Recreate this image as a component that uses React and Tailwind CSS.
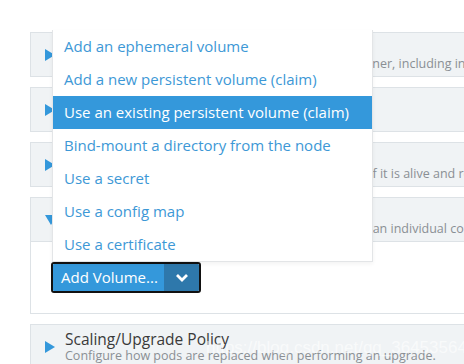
import React from "react";

const font = { fontFamily: '"Open Sans", "Noto Sans", sans-serif' };

function Tri({ down }) {
  return down ? (
    <svg width="12" height="10" viewBox="0 0 12 10" className="shrink-0">
      <polygon points="0,0 12,0 6,10" fill="#3498db" />
    </svg>
  ) : (
    <svg width="10" height="12" viewBox="0 0 10 12" className="shrink-0">
      <polygon points="0,0 10,6 0,12" fill="#3498db" />
    </svg>
  );
}

function Header({ title, sub, down }) {
  return (
    <div className="h-[45px] border border-[#dde2e6] bg-[#f0f3f5] flex items-center pl-[14px] gap-[10px] whitespace-nowrap">
      <Tri down={down} />
      <div className="flex flex-col leading-none">
        <div className="text-[15.5px] text-[#3a3a3a] leading-[18px]">{title}</div>
        <div className="text-[12.5px] text-[#8a8f94] leading-[16px]">{sub}</div>
      </div>
    </div>
  );
}

const items = [
  "Add an ephemeral volume",
  "Add a new persistent volume (claim)",
  "Use an existing persistent volume (claim)",
  "Bind-mount a directory from the node",
  "Use a secret",
  "Use a config map",
  "Use a certificate",
];

export default function App() {
  return (
    <div className="relative w-[464px] h-[364px] overflow-hidden bg-white" style={font}>
      <div className="pt-[32px] pl-[30px] w-[560px] flex flex-col gap-[10px]">
        <Header
          title="Environment Variables"
          sub="Set up values of environment variables for the container, including injecting values from other resources."
        />
        <Header title="Node Scheduling" sub="Configure what nodes the pods can be deployed to" />
        <Header
          title="Health Check"
          sub="Periodically make a request to the containers to see if it is alive and responding correctly."
        />
        <div>
          <Header
            down
            title="Volumes"
            sub="Persist and share data separate from the lifecycle of an individual container."
          />
          <div className="h-[72px] border-x border-b border-[#dde2e6] bg-white pt-[20px] pl-[20px]">
            <div className="relative w-[150px] h-[31px] rounded-[3px] border-2 border-[#111] flex overflow-hidden">
              <div className="flex-1 bg-[#3498db] text-white text-[15px] flex items-center pl-[8px]">
                Add Volume...
              </div>
              <div className="w-[35px] bg-[#2e78ab] flex items-center justify-center">
                <svg width="14" height="10" viewBox="0 0 14 10">
                  <polyline points="2,2 7,7 12,2" fill="none" stroke="white" strokeWidth="2.8" />
                </svg>
              </div>
            </div>
          </div>
        </div>
        <Header
          title="Scaling/Upgrade Policy"
          sub="Configure how pods are replaced when performing an upgrade."
        />
      </div>

      <div className="absolute z-10 left-[52px] top-[30px] w-[321px] bg-white border border-[#e3e5e7] border-t-0 shadow-[0_2px_4px_rgba(0,0,0,0.05)]">
        {items.map((t, i) => (
          <div
            key={t}
            className={
              i === 2
                ? "h-[33px] flex items-center pl-[11px] text-[15px] bg-[#3498db] text-white whitespace-nowrap"
                : "h-[33px] flex items-center pl-[11px] text-[15px] text-[#3d98d6] whitespace-nowrap"
            }
          >
            {t}
          </div>
        ))}
      </div>

      <div
        className="absolute z-10 left-[206px] top-[335px] text-[17px] text-white/60 whitespace-nowrap pointer-events-none"
        style={{ fontFamily: '"Liberation Sans", Arial, sans-serif' }}
      >
        https://blog.csdn.net/qq_36453564
      </div>
    </div>
  );
}
